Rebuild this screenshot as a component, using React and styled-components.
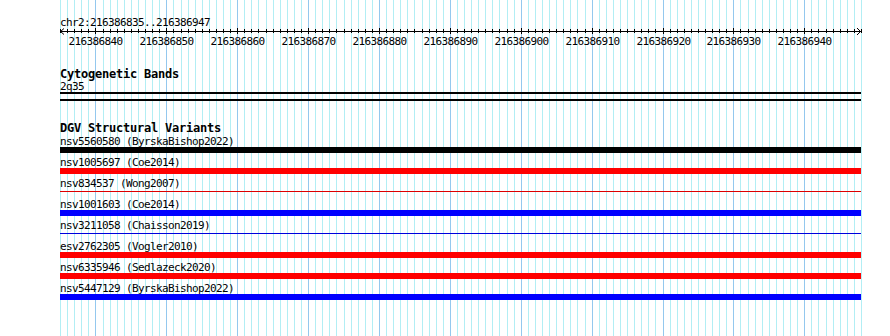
import styled, { createGlobalStyle } from "styled-components"

const START = 216386835
const END = 216386947
const BASES = END - START + 1
const TRACK_W = 801
const PX = TRACK_W / BASES
const MONO = '"DejaVu Sans Mono", "Liberation Mono", monospace'

const GlobalStyle = createGlobalStyle`
    html, body {
        margin: 0;
        background: #fff;
    }
    body {
        font-family: ${MONO};
        color: #000;
    }
`

const Canvas = styled.div`
    position: relative;
    width: 890px;
    height: 336px;
    overflow: hidden;
    background: #fff;
`

const Guides = styled.svg`
    position: absolute;
    top: 0;
    left: 60px;
    z-index: 0;
`

const Tracks = styled.div`
    position: relative;
    z-index: 1;
    display: flex;
    flex-direction: column;
    width: ${TRACK_W}px;
    padding-left: 60px;
`

const Position = styled.div`
    margin-top: 18px;
    font-size: 11px;
    line-height: 10px;
    letter-spacing: -0.62px;
    white-space: pre;
`

const Ruler = styled.svg`
    display: block;
    overflow: visible;
`

const TrackTitle = styled.div`
    margin-top: ${p => p.$gap}px;
    font-size: 12px;
    font-weight: bold;
    line-height: 12px;
    letter-spacing: -0.22px;
    white-space: pre;
`

const Label = styled.div`
    margin-top: ${p => p.$gap || 0}px;
    font-size: 11px;
    line-height: 11px;
    letter-spacing: -0.62px;
    white-space: pre;
`

const BandRule = styled.div`
    height: 2px;
    background: #000;
    margin-top: ${p => p.$gap || 0}px;
`

const Variants = styled.div`
    display: flex;
    flex-direction: column;
    gap: 4px;
    margin-top: 2px;
`

const Row = styled.div`
    display: flex;
    flex-direction: column;
`

const Slot = styled.div`
    height: 6px;
    display: flex;
    align-items: flex-start;
`

const Bar = styled.div`
    width: 100%;
    height: ${p => (p.$thin ? 1 : 6)}px;
    margin-top: ${p => (p.$thin ? 2 : 0)}px;
    background: ${p => p.$color};
`

const variants = [
    { id: "nsv5560580", study: "ByrskaBishop2022", color: "#000" },
    { id: "nsv1005697", study: "Coe2014", color: "#ff0000" },
    { id: "nsv834537", study: "Wong2007", color: "#dd0000", thin: true },
    { id: "nsv1001603", study: "Coe2014", color: "#0000ff" },
    { id: "nsv3211058", study: "Chaisson2019", color: "#0000dd", thin: true },
    { id: "esv2762305", study: "Vogler2010", color: "#ff0000" },
    { id: "nsv6335946", study: "Sedlazeck2020", color: "#ff0000" },
    { id: "nsv5447129", study: "ByrskaBishop2022", color: "#0000ff" },
]

const xAt = i => Math.min(TRACK_W, Math.round(i * PX))

const GuideLines = () => {
    const lines = []
    for (let i = 0; i <= BASES; i++) {
        const major = (START + i) % 10 === 0
        const x = xAt(i) + 0.5
        lines.push(
            <line key={i} x1={x} x2={x} y1={0} y2={336}
                stroke={major ? "#94c8ee" : "#b2eef4"} strokeWidth={1} />
        )
    }
    return (
        <Guides width={TRACK_W + 2} height={336} shapeRendering="crispEdges">
            {lines}
        </Guides>
    )
}

const BaseRuler = () => {
    const ticks = []
    const labels = []
    for (let i = 0; i <= BASES; i++) {
        const pos = START + i
        const major = pos % 10 === 0
        const x = xAt(i) + 0.5
        ticks.push(
            <line key={i} x1={x} x2={x} y1={major ? 0 : 1} y2={major ? 6 : 5}
                stroke="#000" strokeWidth={1} />
        )
        if (major && i < BASES - 3) {
            labels.push(
                <text key={pos} x={xAt(i) + 0.5} y={17} textAnchor="middle"
                    fontFamily={MONO} fontSize={11} letterSpacing="-0.62">
                    {pos}
                </text>
            )
        }
    }
    return (
        <Ruler width={TRACK_W} height={20}>
            <g shapeRendering="crispEdges">
                <line x1={0} x2={TRACK_W} y1={3.5} y2={3.5} stroke="#000" />
                {ticks}
            </g>
            <polyline points="4,0.5 0.5,3.5 4,6.5" fill="none" stroke="#000" />
            <polyline points={`${TRACK_W - 4},0 ${TRACK_W - 0.5},3.5 ${TRACK_W - 4},7`}
                fill="none" stroke="#000" />
            {labels}
        </Ruler>
    )
}

const App = () => {
    return (
        <Canvas>
            <GlobalStyle />
            <GuideLines />
            <Tracks>
                <Position>chr2:{START}..{END}</Position>
                <BaseRuler />

                <TrackTitle $gap={20}>Cytogenetic Bands</TrackTitle>
                <Label $gap={1}>2q35</Label>
                <BandRule />
                <BandRule $gap={5} />

                <TrackTitle $gap={21}>DGV Structural Variants</TrackTitle>
                <Variants>
                    {variants.map(v => (
                        <Row key={v.id}>
                            <Label>{v.id} ({v.study})</Label>
                            <Slot>
                                <Bar $color={v.color} $thin={v.thin} />
                            </Slot>
                        </Row>
                    ))}
                </Variants>
            </Tracks>
        </Canvas>
    )
}

export default App
